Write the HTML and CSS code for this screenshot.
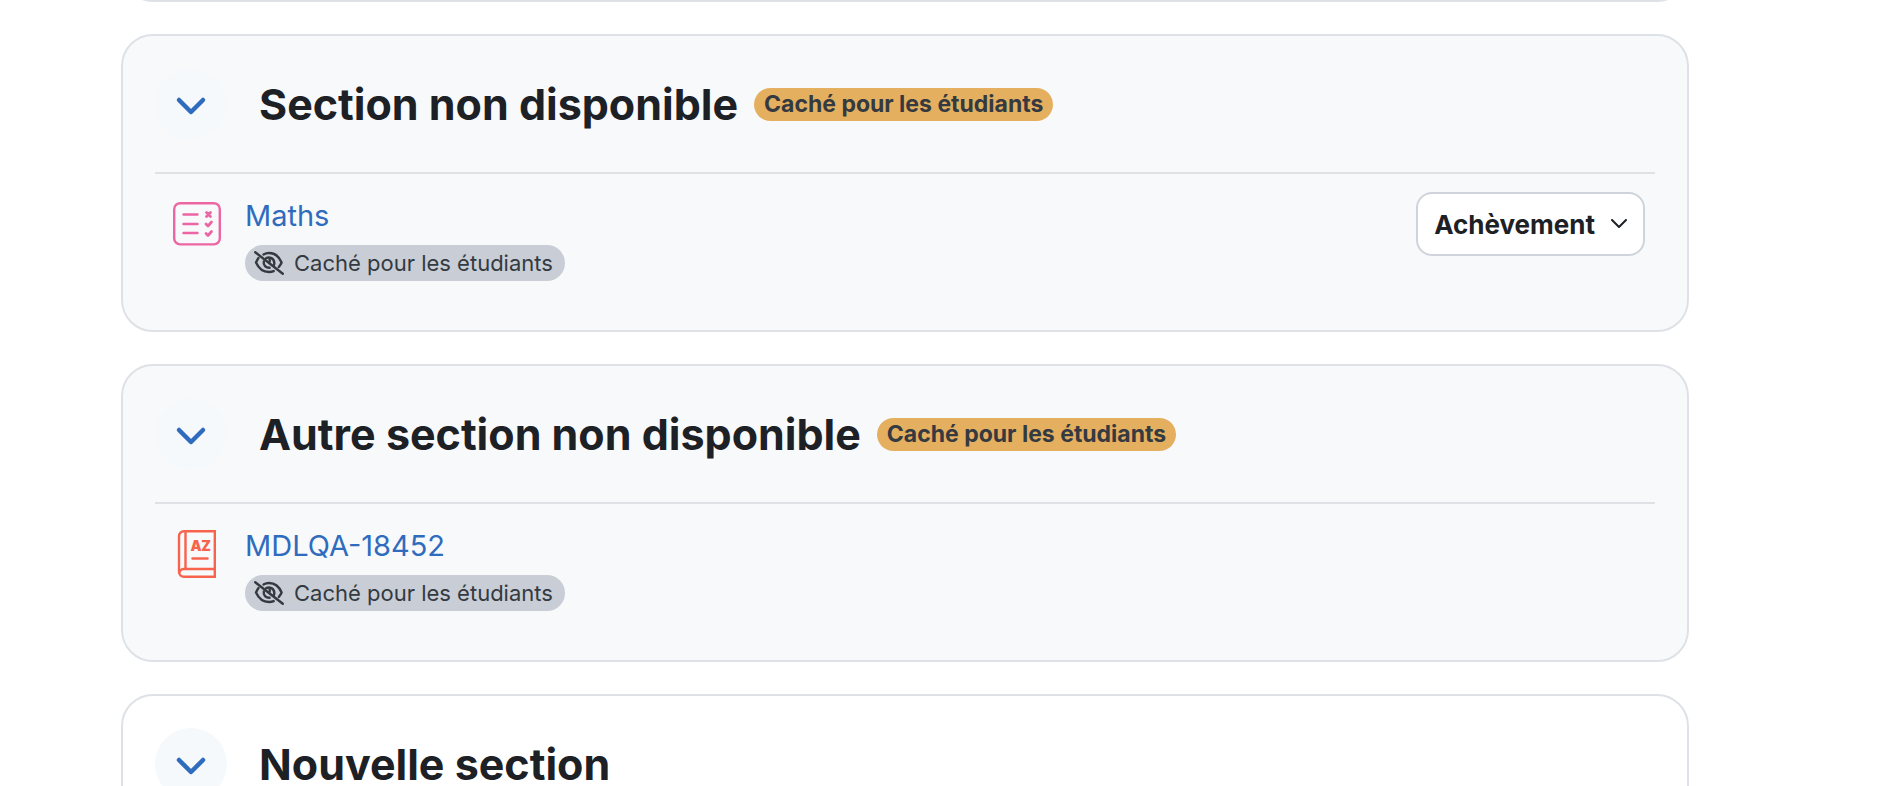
FILE: index.html
```html
<!DOCTYPE html>
<html lang="fr">

<head>
    <meta charset="UTF-8">
    <meta name="viewport" content="width=device-width, initial-scale=1.0">
    <title>Cours</title>
    <link rel="stylesheet" href="styles.css">
</head>

<body>
    <!-- shared icons -->
    <svg class="sprite" aria-hidden="true">
        <symbol id="chevron" viewBox="0 0 72 72">
            <path d="M24 32l12 12 12-12" fill="none" stroke="currentColor" stroke-width="4.500" stroke-linecap="round" stroke-linejoin="round" />
        </symbol>
        <symbol id="eye-slash" viewBox="0 0 30 24">
            <g fill="none" stroke="currentColor" stroke-width="2.400" stroke-linecap="round" stroke-linejoin="round">
                <path d="M1.200 1.200l27.600 21.600" />
                <path d="M9.500 3.500C11.200 2.500 13 2 15 2c6.500 0 10.500 4.500 12.600 9.500-.700 1.700-1.700 3.200-2.800 4.500" />
                <path d="M4.500 7C3.500 8.300 2.700 9.800 2 11.500 4.500 17 9 21 15 21c1.700 0 3.300-.300 4.700-.900" />
                <path d="M12 7.200c3.500-2 8.300.300 8.300 4.800 0 .700-.100 1.300-.300 1.900" />
                <path d="M9.800 10.500c-.700 3.700 2 6.400 5.800 6.300" />
                <path d="M15.500 8c.600 1.400.400 2.500-.300 3.500" />
            </g>
        </symbol>
    </svg>

    <main class="course">
        <section class="card previous"></section>

        <section class="card hidden">
            <header class="card-header">
                <button class="toggle" type="button" aria-label="Replier" aria-expanded="true">
                    <svg><use href="#chevron" /></svg>
                </button>
                <h3>Section non disponible</h3>
                <span class="badge badge-warning">Caché pour les étudiants</span>
            </header>
            <div class="activity">
                <svg class="activity-icon quiz" viewBox="0 0 48 48" fill="none" stroke="currentColor" stroke-width="2.400" stroke-linecap="round" stroke-linejoin="round">
                    <rect x="1.200" y="3.200" width="45.600" height="41.200" rx="6" />
                    <path d="M10.500 14.500h14M10.500 24h14M10.500 33h14" />
                    <path d="M33.500 12.500l4 4M37.500 12.500l-4 4M33 24l2 2 3.500-4M33 33.500l2 2 3.500-4" stroke-width="2.800" />
                </svg>
                <div class="activity-info">
                    <a href="#">Maths</a>
                    <span class="badge badge-hidden">
                        <svg><use href="#eye-slash" /></svg>
                        Caché pour les étudiants
                    </span>
                </div>
                <button class="completion" type="button">
                    Achèvement
                    <svg viewBox="0 0 16 10"><path d="M1 1l7 7 7-7" fill="none" stroke="currentColor" stroke-width="2" stroke-linecap="round" stroke-linejoin="round" /></svg>
                </button>
            </div>
        </section>

        <section class="card hidden">
            <header class="card-header">
                <button class="toggle" type="button" aria-label="Replier" aria-expanded="true">
                    <svg><use href="#chevron" /></svg>
                </button>
                <h3>Autre section non disponible</h3>
                <span class="badge badge-warning">Caché pour les étudiants</span>
            </header>
            <div class="activity">
                <svg class="activity-icon glossary" viewBox="0 0 48 48" fill="none" stroke="currentColor" stroke-width="2.400" stroke-linecap="round">
                    <path d="M41.800 1.200H11a5 5 0 0 0-5 5v35.600a5 5 0 0 0 5 5h30.800zM12.500 1v38M41 39H10.500a4 4 0 0 0-4 4" />
                    <path d="M19.500 28.500h15" />
                    <text x="23" y="21" text-anchor="middle">A</text>
                    <text x="33" y="21" text-anchor="middle">Z</text>
                </svg>
                <div class="activity-info">
                    <a href="#">MDLQA-18452</a>
                    <span class="badge badge-hidden">
                        <svg><use href="#eye-slash" /></svg>
                        Caché pour les étudiants
                    </span>
                </div>
            </div>
        </section>

        <section class="card">
            <header class="card-header">
                <button class="toggle" type="button" aria-label="Replier" aria-expanded="true">
                    <svg><use href="#chevron" /></svg>
                </button>
                <h3>Nouvelle section</h3>
            </header>
        </section>
    </main>
</body>

</html>
```

FILE: styles.css
```css
* {
    box-sizing: border-box;
}

body {
    margin: 0;
    font-family: Inter, "Liberation Sans", sans-serif;
    background-color: #fff;
    color: #1d2125;
}

.sprite {
    display: none;
}

.course {
    display: flex;
    flex-direction: column;
    gap: 32px;
    padding: 0 197px 0 121px;
}

.card {
    padding: 32px;
    border: 2px solid #dee2e6;
    border-radius: 32px;
}

/* only the lower edge of this one is in view */
.previous {
    margin-top: -66px;
}

.hidden {
    background-color: #f8f9fb;
}

.card-header {
    display: flex;
    align-items: center;
}

.toggle {
    width: 72px;
    height: 72px;
    margin-right: 32px;
    padding: 0;
    border: 0;
    border-radius: 50%;
    background-color: #f5f9fc;
    color: #306cbe;
    cursor: pointer;
}

.toggle svg {
    display: block;
    width: 72px;
    height: 72px;
}

h3 {
    margin: 0 16px 0 0;
    font-size: 43px;
    font-weight: 700;
    line-height: 56px;
}

.badge {
    display: inline-flex;
    align-items: center;
    border-radius: 18px;
    white-space: nowrap;
}

.badge-warning {
    height: 33px;
    padding: 0 10px;
    background-color: #e5af60;
    color: #343a40;
    font-size: 23px;
    font-weight: 700;
}

.badge-hidden {
    gap: 10px;
    height: 36px;
    padding: 0 12px 0 9px;
    background-color: #c8cdd6;
    color: #343a40;
    font-size: 22px;
}

.badge-hidden svg {
    width: 30px;
    height: 24px;
}

.activity {
    display: flex;
    align-items: flex-start;
    margin-top: 32px;
    padding: 18px 10px 17px 18px;
    border-top: 2px solid #dee2e6;
}

.activity-icon {
    width: 48px;
    height: 48px;
    margin: 8px 24px 0 0;
}

.quiz {
    color: #eb66a2;
}

.glossary {
    color: #f7634d;
}

.glossary text {
    fill: currentColor;
    stroke: none;
    font-size: 14px;
    font-weight: 900;
}

.activity-info {
    display: flex;
    flex: 1;
    flex-direction: column;
    align-items: flex-start;
    gap: 5px;
}

.activity-info a {
    color: #306cbe;
    font-size: 29px;
    line-height: 48px;
    text-decoration: none;
}

.completion {
    display: flex;
    align-items: center;
    gap: 16px;
    height: 64px;
    padding: 0 16px;
    border: 2px solid #ced4da;
    border-radius: 16px;
    background-color: #fff;
    color: #1d2125;
    font-family: inherit;
    font-size: 26px;
    font-weight: 700;
    cursor: pointer;
}

.completion svg {
    width: 16px;
    height: 10px;
}
```
